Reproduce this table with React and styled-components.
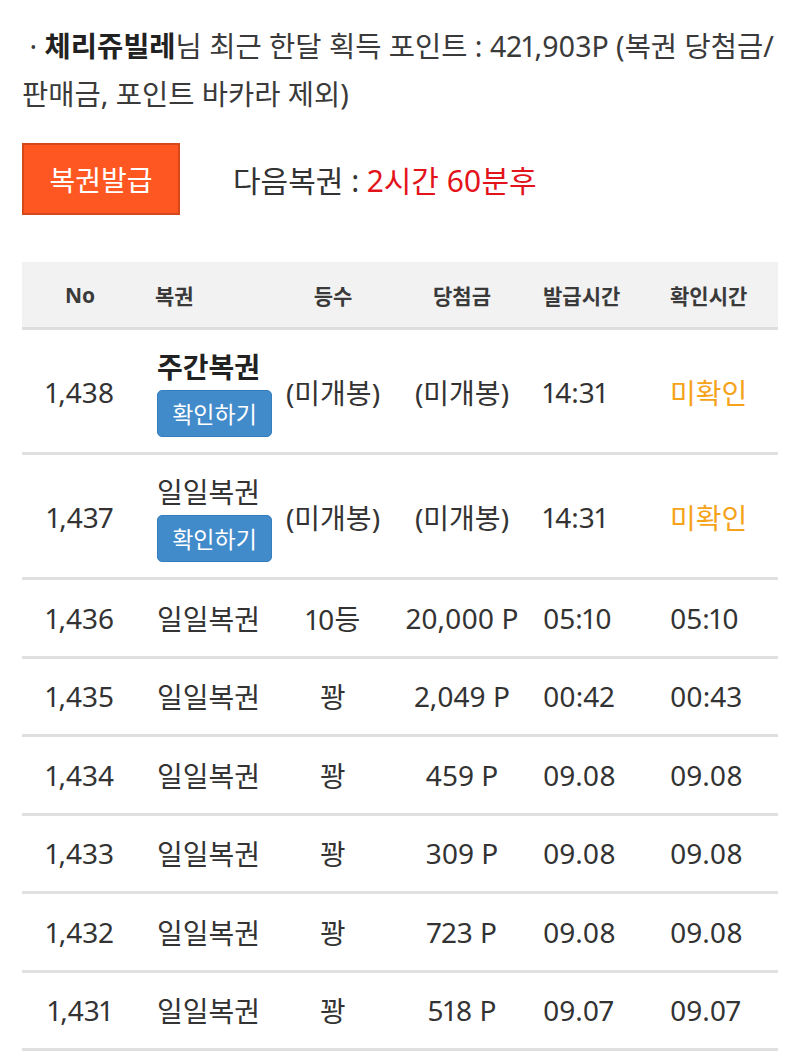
import React from 'react';
import styled, { createGlobalStyle } from 'styled-components';

const GlobalStyle = createGlobalStyle`
  html, body { margin: 0; padding: 0; background: #fff; }
  body {
    font-family: 'Noto Sans', 'Noto Sans CJK KR', sans-serif;
    font-variant-numeric: proportional-nums;
    color: #333;
  }
`;

const Page = styled.div`
  width: 800px;
  padding: 22px 22px 0;
  box-sizing: border-box;
`;

const Summary = styled.p`
  margin: 0;
  font-size: 28.5px;
  line-height: 48px;
  color: #3a3a3a;
  b { font-weight: 700; color: #222; }
`;

const IssueRow = styled.div`
  display: flex;
  align-items: center;
  gap: 53px;
  margin-top: 25px;
`;

const IssueButton = styled.button`
  width: 158px;
  height: 72px;
  background: #ff5722;
  border: 2px solid #d6481c;
  color: #fff;
  font-family: inherit;
  font-size: 28px;
  padding: 0;
  cursor: pointer;
`;

const NextInfo = styled.div`
  font-size: 30px;
  color: #333;
  span { color: #e3131b; }
`;

const Table = styled.div`
  margin-top: 47px;
  width: 756px;
`;

const cols = '116px 147px 96px 162px 127px 108px';

const HeadRow = styled.div`
  display: grid;
  grid-template-columns: ${cols};
  align-items: center;
  height: 65px;
  background: #f2f2f2;
  border-bottom: 3px solid #dedede;
`;

const Row = styled.div`
  display: grid;
  grid-template-columns: ${cols};
  align-items: center;
  min-height: ${p => (p.$tall ? '125px' : '78.5px')};
  border-bottom: 3px solid #e0e0e0;
  box-sizing: border-box;
  padding: ${p => (p.$tall ? '14px 0 12px' : '0')};
`;

const HeadCell = styled.div`
  font-size: 21px;
  font-weight: 700;
  color: #3a3a3a;
  text-align: ${p => p.$align || 'center'};
  padding-left: ${p => p.$pad || 0}px;
`;

const Cell = styled.div`
  font-size: 28px;
  color: ${p => p.$color || '#333'};
  text-align: ${p => p.$align || 'center'};
  padding-left: ${p => p.$pad || 0}px;
  white-space: nowrap;
`;

const TicketCell = styled.div`
  display: flex;
  flex-direction: column;
  align-items: flex-start;
  gap: 4px;
  padding-left: 19px;
`;

const TicketName = styled.div`
  font-size: 28px;
  line-height: 38px;
  font-weight: ${p => (p.$bold ? 700 : 400)};
  color: ${p => (p.$bold ? '#222' : '#333')};
`;

const CheckButton = styled.button`
  width: 115px;
  height: 47px;
  background: #428bca;
  border: 1px solid #357ebd;
  border-radius: 5px;
  color: #fff;
  font-family: inherit;
  font-size: 23px;
  padding: 0;
  cursor: pointer;
`;

const rows = [
  { no: '1,436', rank: '10등', prize: '20,000 P', issued: '05:10', checked: '05:10' },
  { no: '1,435', rank: '꽝', prize: '2,049 P', issued: '00:42', checked: '00:43' },
  { no: '1,434', rank: '꽝', prize: '459 P', issued: '09.08', checked: '09.08' },
  { no: '1,433', rank: '꽝', prize: '309 P', issued: '09.08', checked: '09.08' },
  { no: '1,432', rank: '꽝', prize: '723 P', issued: '09.08', checked: '09.08' },
  { no: '1,431', rank: '꽝', prize: '518 P', issued: '09.07', checked: '09.07' },
];

const pending = [
  { no: '1,438', name: '주간복권', bold: true },
  { no: '1,437', name: '일일복권', bold: false },
];

export default function App() {
  return (
    <Page>
      <GlobalStyle />
      <Summary>
        &nbsp;· <b>체리쥬빌레</b>님 최근 한달 획득 포인트 : 421,903P (복권 당첨금/판매금, 포인트 바카라 제외)
      </Summary>
      <IssueRow>
        <IssueButton>복권발급</IssueButton>
        <NextInfo>다음복권 : <span>2시간 60분후</span></NextInfo>
      </IssueRow>
      <Table>
        <HeadRow>
          <HeadCell>No</HeadCell>
          <HeadCell $align="left" $pad={17}>복권</HeadCell>
          <HeadCell>등수</HeadCell>
          <HeadCell>당첨금</HeadCell>
          <HeadCell $align="left">발급시간</HeadCell>
          <HeadCell $align="left">확인시간</HeadCell>
        </HeadRow>
        {pending.map(r => (
          <Row key={r.no} $tall>
            <Cell>{r.no}</Cell>
            <TicketCell>
              <TicketName $bold={r.bold}>{r.name}</TicketName>
              <CheckButton>확인하기</CheckButton>
            </TicketCell>
            <Cell>(미개봉)</Cell>
            <Cell>(미개봉)</Cell>
            <Cell $align="left">14:31</Cell>
            <Cell $align="left" $color="#f5a31a">미확인</Cell>
          </Row>
        ))}
        {rows.map(r => (
          <Row key={r.no}>
            <Cell>{r.no}</Cell>
            <Cell $align="left" $pad={19}>일일복권</Cell>
            <Cell>{r.rank}</Cell>
            <Cell>{r.prize}</Cell>
            <Cell $align="left">{r.issued}</Cell>
            <Cell $align="left">{r.checked}</Cell>
          </Row>
        ))}
      </Table>
    </Page>
  );
}
